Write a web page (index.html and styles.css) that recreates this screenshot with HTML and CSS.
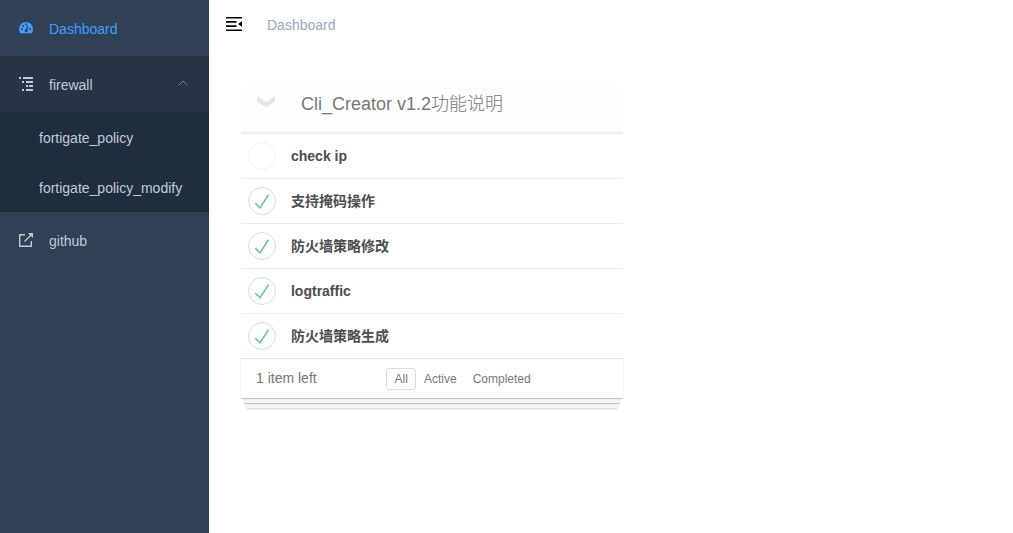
FILE: index.html
```html
<!DOCTYPE html>
<html lang="zh">
<head>
<meta charset="utf-8">
<title>Dashboard</title>
<link rel="stylesheet" href="styles.css">
</head>
<body>
<svg class="defs" width="0" height="0">
  <symbol id="check" viewBox="-2 -2 104 104"><circle cx="50" cy="50" r="50" fill="none" stroke="#bddad5" stroke-width="3"/><path fill="#5dc2af" d="M72 25L42 71 27 56l-4 4 20 20 34-52z"/></symbol>
</svg>
<div class="app">
  <nav class="sidebar">
    <a class="item active">
      <svg class="icon" viewBox="0 0 14 14"><path fill="currentColor" fill-rule="evenodd" d="M7 1a7 7 0 0 0-7 7c0 1.500.4 3 1.100 4.200h11.800A8 8 0 0 0 14 8a7 7 0 0 0-7-7zM2 7.200h1.800V9H2zM3.300 4h1.700v1.700H3.300zM6.200 2.600H8v1.700H6.200zM10.200 7.200H12V9h-1.800zM8.200 4.800l1.200.4-1.100 3.500a1.500 1.500 0 1 1-1.300-.4z"/></svg>
      <span>Dashboard</span>
    </a>
    <div class="group">
      <a class="item">
        <svg class="icon" viewBox="0 0 14 14"><path fill="currentColor" d="M0 0h2v2H0zM4 0h10v2H4zM3 4h2v2H3zM7 4h7v2H7zM7 8h2v2H7zM10 8h4v2h-4zM3 12h2v2H3zM7 12h7v2H7z"/></svg>
        <span>firewall</span>
        <svg class="arrow" viewBox="0 0 10 6"><path d="M.7 5.300L5 1l4.300 4.300" fill="none" stroke="#848689"/></svg>
      </a>
      <div class="submenu">
        <a class="subitem">fortigate_policy</a>
        <a class="subitem">fortigate_policy_modify</a>
      </div>
    </div>
    <a class="item">
      <svg class="icon" viewBox="0 0 14 14"><path d="M6 1.700H.7v11.600h11.600V8M5.500 8.500l7-7" fill="none" stroke="currentColor" stroke-width="1.400"/><path fill="currentColor" d="M9 0h5v5z"/></svg>
      <span>github</span>
    </a>
  </nav>
  <div class="main">
    <header class="navbar">
      <svg class="hamburger" viewBox="0 0 16 14"><path fill="#000" d="M0 0h16v1.600H0zM0 4.100h10.500v1.600H0zM0 8.300h10.500v1.600H0zM0 12.400h16V14H0zM16 4v6l-3.800-3z"/></svg>
      <span class="crumb">Dashboard</span>
    </header>
    <section class="todo">
      <div class="title">
        <svg class="chevron" viewBox="0 0 18 12"><path d="M0 0l9 6 9-6v5.500L9 11.500 0 5.500z" fill="#e6e6e6"/></svg>
        <span>Cli_Creator v1.2功能说明</span>
      </div>
      <ul class="list">
        <li class="row"><svg class="toggle" viewBox="-2 -2 104 104"><circle cx="50" cy="50" r="50" fill="none" stroke="#ededed" stroke-width="3"/></svg><span>check ip</span></li>
        <li class="row"><svg class="toggle"><use href="#check"/></svg><span class="cjk">支持掩码操作</span></li>
        <li class="row"><svg class="toggle"><use href="#check"/></svg><span class="cjk">防火墙策略修改</span></li>
        <li class="row"><svg class="toggle"><use href="#check"/></svg><span>logtraffic</span></li>
        <li class="row"><svg class="toggle"><use href="#check"/></svg><span class="cjk">防火墙策略生成</span></li>
      </ul>
      <footer class="footer">
        <span class="count">1 item left</span>
        <div class="filters"><a class="filter selected">All</a><a class="filter">Active</a><a class="filter">Completed</a></div>
      </footer>
    </section>
  </div>
</div>
</body>
</html>
```
FILE: styles.css
```css
* { box-sizing: border-box; }
body {
  margin: 0;
  font: 14px "Liberation Sans", "Noto Sans CJK SC", sans-serif;
  background: #fff;
}
.defs { position: absolute; }
.app { display: flex; height: 533px; overflow: hidden; }
.sidebar { width: 209px; flex: none; background: #304156; color: #bfcbd9; }
.item { display: flex; align-items: center; height: 56px; padding: 0 21px 0 19px; line-height: 56px; }
.item span { padding-top: 2px; }
.active { color: #409eff; }
.icon { width: 14px; height: 14px; margin-right: 16px; }
.group { background: #283446; }
.arrow { width: 10px; height: 6px; margin: 0 0 2px auto; }
.submenu { background: #1f2d3d; }
.subitem { display: block; height: 50px; line-height: 52px; padding-left: 39px; }
.main { flex: 1; }
.navbar { display: flex; align-items: center; height: 50px; padding-left: 17px; color: #97a8be; }
.hamburger { width: 16px; height: 14px; margin: 0 25px 2px 0; }
.todo {
  width: 382px;
  margin: 32px 0 0 32px;
  color: #4d4d4d;
}
.title {
  display: flex;
  align-items: center;
  height: 52px;
  padding: 0 0 8px 16px;
  border-bottom: 1px solid #e6e6e6;
  background: #fefefe;
  box-shadow: inset 0 -2px 1px rgba(0, 0, 0, .03);
  font-size: 18px;
  font-weight: 300;
  color: #777;
}
.title span { padding-bottom: 3px; }
.chevron { width: 18px; height: 12px; margin: 0 26px 3px 0; }
.list { margin: 0; padding: 0; list-style: none; }
.row {
  display: flex;
  align-items: center;
  height: 45px;
  padding-left: 6.700px;
  border-bottom: 1px solid #ededed;
  font-weight: 700;
}
.row:last-child { border-color: #e6e6e6; }
.toggle { width: 28px; height: 28px; margin-right: 15.300px; }
.cjk { padding-bottom: 2px; }
.footer {
  display: flex;
  align-items: center;
  height: 39px;
  padding-left: 15px;
  background: #fff;
  color: #777;
  box-shadow: 0 1px 1px rgba(0, 0, 0, .2), 0 8px 0 -3px #f6f6f6, 0 9px 1px -3px rgba(0, 0, 0, .2), 0 16px 0 -6px #f6f6f6, 0 17px 2px -6px rgba(0, 0, 0, .2);
}
.count { width: 130px; padding-bottom: 1px; }
.filters { display: flex; padding-top: 1px; font-size: 12px; }
.filter { height: 22px; line-height: 20px; padding: 0 7px; border: 1px solid transparent; border-radius: 3px; }
.selected { width: 30px; padding-left: 7.500px; border-color: rgba(175, 47, 47, .2); }
```
